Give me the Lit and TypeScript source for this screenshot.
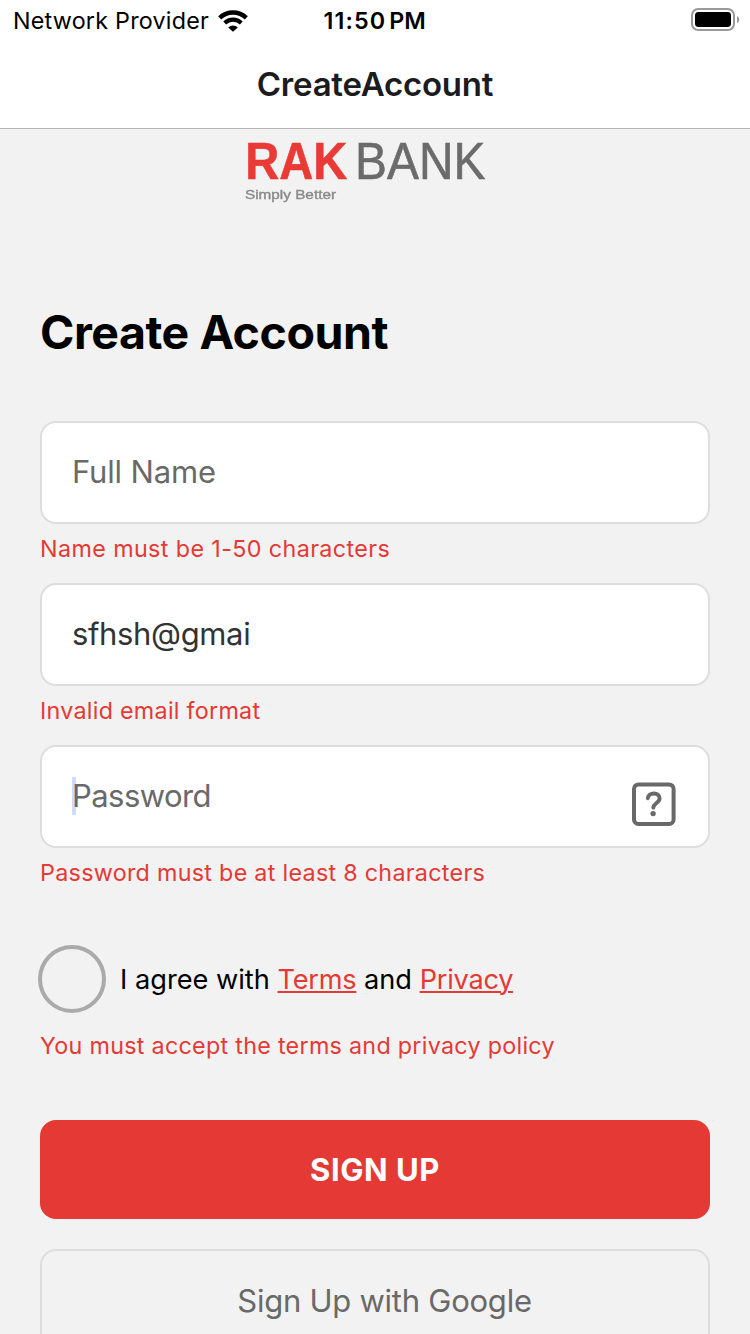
import { LitElement, html, css, svg, nothing } from "lit";
import { customElement, property } from "lit/decorators.js";

const wifi = svg`
  <svg width="30" height="22" viewBox="0 0 30 22" fill="none" stroke="#000">
    <path d="M1.7 7.8 A19.4 19.4 0 0 1 28.3 7.8" stroke-width="4.5" />
    <path d="M6.7 12.9 A12.2 12.2 0 0 1 23.3 12.9" stroke-width="4.1" />
    <path d="M15 21.7 L10.2 17.4 A6.8 6.8 0 0 1 19.8 17.4 Z" fill="#000" stroke="none" />
  </svg>`;

const battery = svg`
  <svg width="49" height="23" viewBox="0 0 49 23">
    <rect x="1" y="1" width="42" height="21" rx="6.2" fill="none" stroke="#999" stroke-width="2" />
    <rect x="4" y="4" width="36" height="15" rx="3.4" />
    <path d="M46 8 Q48.3 9 48.3 11.5 Q48.3 14 46 15 Z" fill="#999" />
  </svg>`;

const help = svg`
  <svg width="44" height="44" viewBox="0 0 44 44" fill="none" stroke="#696969">
    <rect x="2" y="2.4" width="39.6" height="39.6" rx="4.5" stroke-width="4" />
    <path d="M15.8 16.2 C16.2 10.1 27.6 9.6 27.6 16.4 C27.6 20.6 21.5 21.2 21.3 25.6" stroke-width="3.9" stroke-linecap="round" />
    <circle cx="21.1" cy="31.6" r="2.7" fill="#696969" stroke="none" />
  </svg>`;

@customElement("status-bar")
export class StatusBar extends LitElement {
  static styles = css`
    :host {
      display: grid;
      grid-template-columns: 323.6px 1fr auto;
      align-items: center;
      height: 41px;
      padding: 0 10px 0 0;
      font-size: 23.3px;
      color: #000;
    }
    svg { display: block; }
    .carrier { display: flex; align-items: center; gap: 8.6px; padding-left: 13px; letter-spacing: 0.23px; }
    .clock { display: flex; gap: 3px; font-weight: 600; }
    .digits { letter-spacing: 1.1px; }
    .power { padding-bottom: 2px; }
  `;
  render() {
    return html`
      <div class="carrier"><span>Network Provider</span>${wifi}</div>
      <div class="clock"><span class="digits">11:50</span><span>PM</span></div>
      <div class="power">${battery}</div>
    `;
  }
}

@customElement("brand-logo")
export class BrandLogo extends LitElement {
  static styles = css`
    :host { display: block; }
    svg { display: block; overflow: visible; filter: blur(0.6px); }
    text { font-family: "Liberation Sans", Arial, sans-serif; }
    .rak { font-size: 52px; font-weight: 700; fill: #e93a36; stroke: #e93a36; stroke-width: 0.6px; }
    .bank { font-size: 52px; fill: #6b6b6b; stroke: #6b6b6b; stroke-width: 0.6px; }
    .tagline { font-size: 13.5px; fill: #8a8a8a; stroke: #8a8a8a; stroke-width: 0.4px; }
  `;
  render() {
    return html`
      <svg width="270" height="72" viewBox="0 0 270 72">
        <text class="rak" x="5.2" y="50" textLength="102" lengthAdjust="spacingAndGlyphs">RAK</text>
        <text class="bank" x="115" y="50" textLength="130.4" lengthAdjust="spacingAndGlyphs">BANK</text>
        <text class="tagline" x="5" y="69.8" textLength="91" lengthAdjust="spacingAndGlyphs">Simply Better</text>
      </svg>
    `;
  }
}

@customElement("form-field")
export class FormField extends LitElement {
  @property() placeholder = "";
  @property() value = "";
  @property() error = "";
  @property({ type: Number }) spacing = 0;
  @property({ type: Number }) errorSpacing = 0;
  @property({ type: Boolean }) secure = false;

  static styles = css`
    :host { display: block; }
    .box {
      box-sizing: border-box;
      display: flex;
      align-items: center;
      justify-content: space-between;
      height: 103px;
      padding: 0 32px 2px 30px;
      border: 2px solid #dddddd;
      border-radius: 16px;
      background: #fff;
      font-size: 31px;
    }
    .entry { display: flex; align-items: center; line-height: 39px; color: #333; }
    .hint { color: #696969; }
    .caret { width: 4px; height: 38px; margin-right: -4px; border-radius: 1px; background: #d0dafc; }
    .icon { padding-top: 16px; }
    svg { display: block; }
    .error { margin-top: 10px; line-height: 29px; font-size: 23.3px; color: #e53935; }
  `;
  render() {
    return html`
      <div class="box">
        <div class="entry">
          ${this.secure ? html`<span class="caret"></span>` : nothing}
          <span class=${this.value ? "" : "hint"} style="letter-spacing:${this.spacing}px">${this.value || this.placeholder}</span>
        </div>
        ${this.secure ? html`<div class="icon">${help}</div>` : nothing}
      </div>
      <div class="error" style="letter-spacing:${this.errorSpacing}px">${this.error}</div>
    `;
  }
}

@customElement("app-root")
export class AppRoot extends LitElement {
  static styles = css`
    :host {
      display: block;
      height: 1334px;
      overflow: hidden;
      background: #f2f2f2;
      font-family: Inter, "Noto Sans", sans-serif;
      color: #000;
    }
    .top { box-sizing: border-box; height: 129px; background: #fff; border-bottom: 1px solid #b5b5b5; }
    .title {
      margin: 0;
      text-align: center;
      line-height: 86px;
      font-size: 33px;
      font-weight: 600;
      letter-spacing: -0.22px;
      color: #1c1c1e;
    }
    .logo { padding-left: 240px; }
    main { display: flex; flex-direction: column; padding: 0 40px; }
    h1 { margin: 101px 0 59px; line-height: 60px; font-size: 46.5px; font-weight: 700; letter-spacing: -0.46px; }
    .fields { display: flex; flex-direction: column; gap: 20px; }
    .consent { display: flex; align-items: center; gap: 14px; margin: 58px 0 0 -2px; font-size: 27.2px; }
    .check { box-sizing: border-box; width: 68px; height: 68px; border: 4px solid #aaa; border-radius: 50%; }
    a { color: #e53935; text-decoration: underline; text-decoration-thickness: 2px; text-underline-offset: 2px; letter-spacing: -0.25px; }
    .error { margin-top: 18px; line-height: 29px; font-size: 23.3px; letter-spacing: 0.285px; color: #e53935; }
    button { box-sizing: border-box; padding: 0; border-radius: 16px; font-family: inherit; font-size: 31px; }
    .primary { height: 99px; margin-top: 60px; border: 0; background: #e53935; color: #fff; font-weight: 700; letter-spacing: 0.55px; }
    .google { height: 103px; margin-top: 30px; padding-left: 19px; border: 2px solid #dddddd; background: transparent; color: #696969; letter-spacing: -0.25px; }
  `;
  render() {
    return html`
      <div class="top">
        <status-bar></status-bar>
        <div class="title">CreateAccount</div>
      </div>
      <brand-logo class="logo"></brand-logo>
      <main>
        <h1>Create Account</h1>
        <div class="fields">
          <form-field placeholder="Full Name" .spacing=${-0.16} error="Name must be 1-50 characters" .errorSpacing=${0.39}></form-field>
          <form-field value="sfhsh@gmai" .spacing=${-0.36} error="Invalid email format" .errorSpacing=${0.27}></form-field>
          <form-field secure placeholder="Password" .spacing=${-0.56} error="Password must be at least 8 characters" .errorSpacing=${0.29}></form-field>
        </div>
        <div class="consent">
          <span class="check"></span>
          <span>I agree with <a>Terms</a> and <a>Privacy</a></span>
        </div>
        <div class="error">You must accept the terms and privacy policy</div>
        <button class="primary">SIGN UP</button>
        <button class="google">Sign Up with Google</button>
      </main>
    `;
  }
}
